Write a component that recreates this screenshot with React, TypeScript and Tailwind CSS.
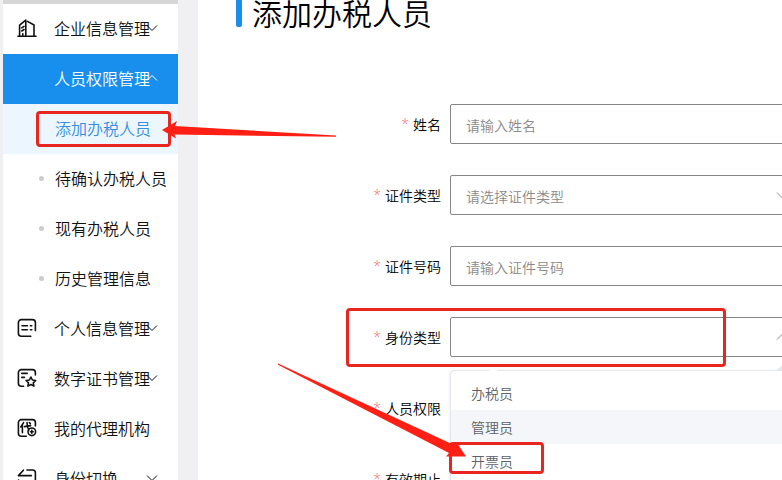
import type { ReactNode } from "react";
import clsx from "clsx";

type IconProps = { children: ReactNode };

function MenuIcon({ children }: IconProps) {
  return (
    <svg
      viewBox="0 0 20 20"
      className="size-5 shrink-0"
      fill="none"
      stroke="currentColor"
      strokeWidth="1.6"
      strokeLinecap="round"
      strokeLinejoin="round"
      aria-hidden="true"
    >
      {children}
    </svg>
  );
}

const BuildingIcon = () => (
  <MenuIcon>
    <path d="M1 18.200h18" />
    <path d="M2.600 18V7.200L8.800 2.200V18" />
    <path d="M10.500 3.400 17 7V18" />
    <path d="M4.800 9.800l2.200-1.500M4.800 13l2.200-1.500M5.800 17.500v-1.800" />
  </MenuIcon>
);

const ProfileIcon = () => (
  <MenuIcon>
    <path d="M18.4 12.6V4.6a3 3 0 0 0-3-3H4.4a3 3 0 0 0-3 3v10.600a3 3 0 0 0 3 3h9.400" />
    <path d="M5 7.8h5.400M13.4 7.8h1.400M5 11.8h5.400M13.4 11.8h1.400" />
  </MenuIcon>
);

const CertificateIcon = () => (
  <MenuIcon>
    <path d="M18.4 7V4.6a3 3 0 0 0-3-3H4.4a3 3 0 0 0-3 3v10.600a3 3 0 0 0 3 3h2.200" />
    <path d="M4.8 5.4h5.400M4.8 9.4h2.600" />
    <path d="m13.9 9 1.5 3 3.300.5-2.400 2.300.6 3.300-3-1.600-3 1.600.6-3.300-2.400-2.300 3.300-.5z" />
  </MenuIcon>
);

const AgencyIcon = () => (
  <MenuIcon>
    <path d="M18.4 8V4.6a3 3 0 0 0-3-3H4.4a3 3 0 0 0-3 3v10.600a3 3 0 0 0 3 3h5" />
    <path d="M6.6 4.6 3.8 9M5.4 7.4v7.400M7.6 8.6l6-1M10 4.6c.2 3.600.6 5.600 1.800 7.400M12.4 4.6l1 1" />
    <circle cx="14.8" cy="13.8" r="3.8" />
    <path d="M14.8 12.4v2.800M13.4 13.8h2.800" />
  </MenuIcon>
);

const SwitchIcon = () => (
  <MenuIcon>
    <path d="M6.4 2.2 1.4 7.6h13" />
    <path d="M10 2h5.600a2.800 2.800 0 0 1 2.800 2.800V15a2.800 2.800 0 0 1-2.800 2.800H4.4a2.800 2.800 0 0 1-2.800-2.800v-3" />
  </MenuIcon>
);

function Chevron({ up, className }: { up?: boolean; className?: string }) {
  return (
    <svg
      viewBox="0 0 12 12"
      className={clsx("pointer-events-none absolute size-3", className)}
      fill="none"
      stroke="currentColor"
      aria-hidden="true"
    >
      <path d={up ? "M1 8.5 6 3.5l5 5" : "M1 3.5l5 5 5-5"} />
    </svg>
  );
}

const SUB_ITEMS = ["添加办税人员", "待确认办税人员", "现有办税人员", "历史管理信息"];

const MENU = [
  { label: "企业信息管理", icon: BuildingIcon, expandable: true },
  { label: "人员权限管理", expandable: true, children: SUB_ITEMS },
  { label: "个人信息管理", icon: ProfileIcon, expandable: true },
  { label: "数字证书管理", icon: CertificateIcon, expandable: true },
  { label: "我的代理机构", icon: AgencyIcon, expandable: false },
  { label: "身份切换", icon: SwitchIcon, expandable: true },
];

const ROLES = ["办税员", "管理员", "开票员"];

function Sidebar() {
  return (
    <nav className="ml-[3px] w-[175px] shrink-0 border-t-4 border-[#d6d6d6] bg-white text-base whitespace-nowrap">
      {MENU.map(({ label, icon: Icon, expandable, children }) => (
        <div key={label}>
          <button
            type="button"
            aria-expanded={expandable ? !!children : undefined}
            className={clsx(
              "relative flex h-[50px] w-full cursor-pointer items-center gap-[17px] pb-0.5 pl-3.5",
              children ? "bg-[#198fed] text-white" : "text-[#111]",
            )}
          >
            {Icon ? <Icon /> : <span className="size-5 shrink-0" />}
            {label}
            {expandable && <Chevron up={!!children} className="right-5" />}
          </button>
          {children?.map((item, i) => (
            <a
              key={item}
              href="#"
              className={clsx(
                "flex h-[50px] items-center gap-[11px] pb-0.5 pl-[36px]",
                i === 0 ? "bg-[#ebf6fe] text-[#3a8ee0]" : "text-[#111]",
              )}
            >
              <span
                className={clsx(
                  "size-[5px] shrink-0 rounded-full",
                  i > 0 && "bg-[#ccc]",
                )}
              />
              {item}
            </a>
          ))}
        </div>
      ))}
    </nav>
  );
}

function Field({
  id,
  label,
  children,
}: {
  id: string;
  label: string;
  children: ReactNode;
}) {
  return (
    <div className="flex items-center">
      <label
        htmlFor={id}
        className="flex w-[252px] shrink-0 justify-end gap-1 pr-[9px] text-black"
      >
        <span className="font-['Open_Sans',sans-serif] text-[#f56c6c]">*</span>
        {label}
      </label>
      <div className="relative flex flex-1 items-center">{children}</div>
    </div>
  );
}

const CONTROL =
  "h-10 w-full appearance-none rounded-xs border border-[#85868a] bg-white px-[15px] pt-0.5 text-[#8a8a8a] outline-none placeholder:text-[#8a8a8a]";

function RoleList() {
  return (
    <div className="absolute top-[53px] right-0 left-0 z-10 rounded-sm border border-[#e4e7ed] bg-white py-[5px] shadow-sm">
      <span className="absolute -top-px left-[38px] h-px w-2 bg-white" />
      <svg
        viewBox="0 0 16 6"
        className="absolute -top-1.5 right-2.5 h-1.5 w-4"
        aria-hidden="true"
      >
        <path d="M0 6 8 0l8 6z" fill="#e4e7ed" />
      </svg>
      <ul role="listbox" aria-label="身份类型">
        {ROLES.map((role, i) => (
          <li
            key={role}
            role="option"
            aria-selected={false}
            className={clsx(
              "flex h-[34px] cursor-pointer items-center px-5 text-[#606266]",
              i === 1 && "bg-[#f5f6fa]",
            )}
          >
            {role}
          </li>
        ))}
      </ul>
    </div>
  );
}

function PersonForm() {
  return (
    <form className="-mr-5 flex flex-col gap-[31px] pt-[77px] text-sm whitespace-nowrap">
      <Field id="name" label="姓名">
        <input id="name" className={CONTROL} placeholder="请输入姓名" />
      </Field>
      <Field id="idType" label="证件类型">
        <select id="idType" className={CONTROL} defaultValue="">
          <option value="">请选择证件类型</option>
        </select>
        <Chevron className="right-3.5 text-[#8a8a8a]" />
      </Field>
      <Field id="idNumber" label="证件号码">
        <input id="idNumber" className={CONTROL} placeholder="请输入证件号码" />
      </Field>
      <Field id="role" label="身份类型">
        <input
          id="role"
          role="combobox"
          aria-expanded="true"
          readOnly
          className={CONTROL}
        />
        <Chevron up className="right-3.5 text-[#8a8a8a]" />
        <RoleList />
      </Field>
      <Field id="permission" label="人员权限">
        <input id="permission" className={CONTROL} />
      </Field>
      <Field id="validUntil" label="有效期止">
        <input id="validUntil" className={CONTROL} />
      </Field>
    </form>
  );
}

// Red guide marks drawn over the page
function GuideMarks() {
  return (
    <div className="pointer-events-none absolute inset-0 z-20">
      <div className="absolute top-[111px] left-[36px] h-[36px] w-[135px] rounded-sm border-3 border-[#e8261f]" />
      <div className="absolute top-[308px] left-[346px] h-[59px] w-[380px] rounded-sm border-3 border-[#e8261f]" />
      <div className="absolute top-[442px] left-[449px] h-[32px] w-[95px] rounded-sm border-3 border-[#e8261f]" />
      <svg className="absolute inset-0 size-full" fill="#ff1f14" aria-hidden="true">
        <path d="M162 130 177 121 175 126 336 135.5V136.8L174.5 134.5 176 138.5z" />
        <path d="M278 363.5 453 444.500 457 443 466 456.5 446 456.500 449 453 278 364.8z" />
      </svg>
    </div>
  );
}

export default function App() {
  return (
    <div className="relative flex h-screen overflow-hidden bg-[#f0f0f2] font-['Noto_Sans_CJK_SC',sans-serif] font-[350]">
      <Sidebar />
      <main className="ml-5 min-w-0 flex-1 overflow-hidden bg-white">
        <header className="flex h-[27px] items-end gap-2.5 pl-[38px]">
          <span className="h-full w-1.5 rounded-b-xs bg-[#198fed]" />
          <h1 className="text-[30px] leading-[30px] text-black">添加办税人员</h1>
        </header>
        <PersonForm />
      </main>
      <GuideMarks />
    </div>
  );
}
